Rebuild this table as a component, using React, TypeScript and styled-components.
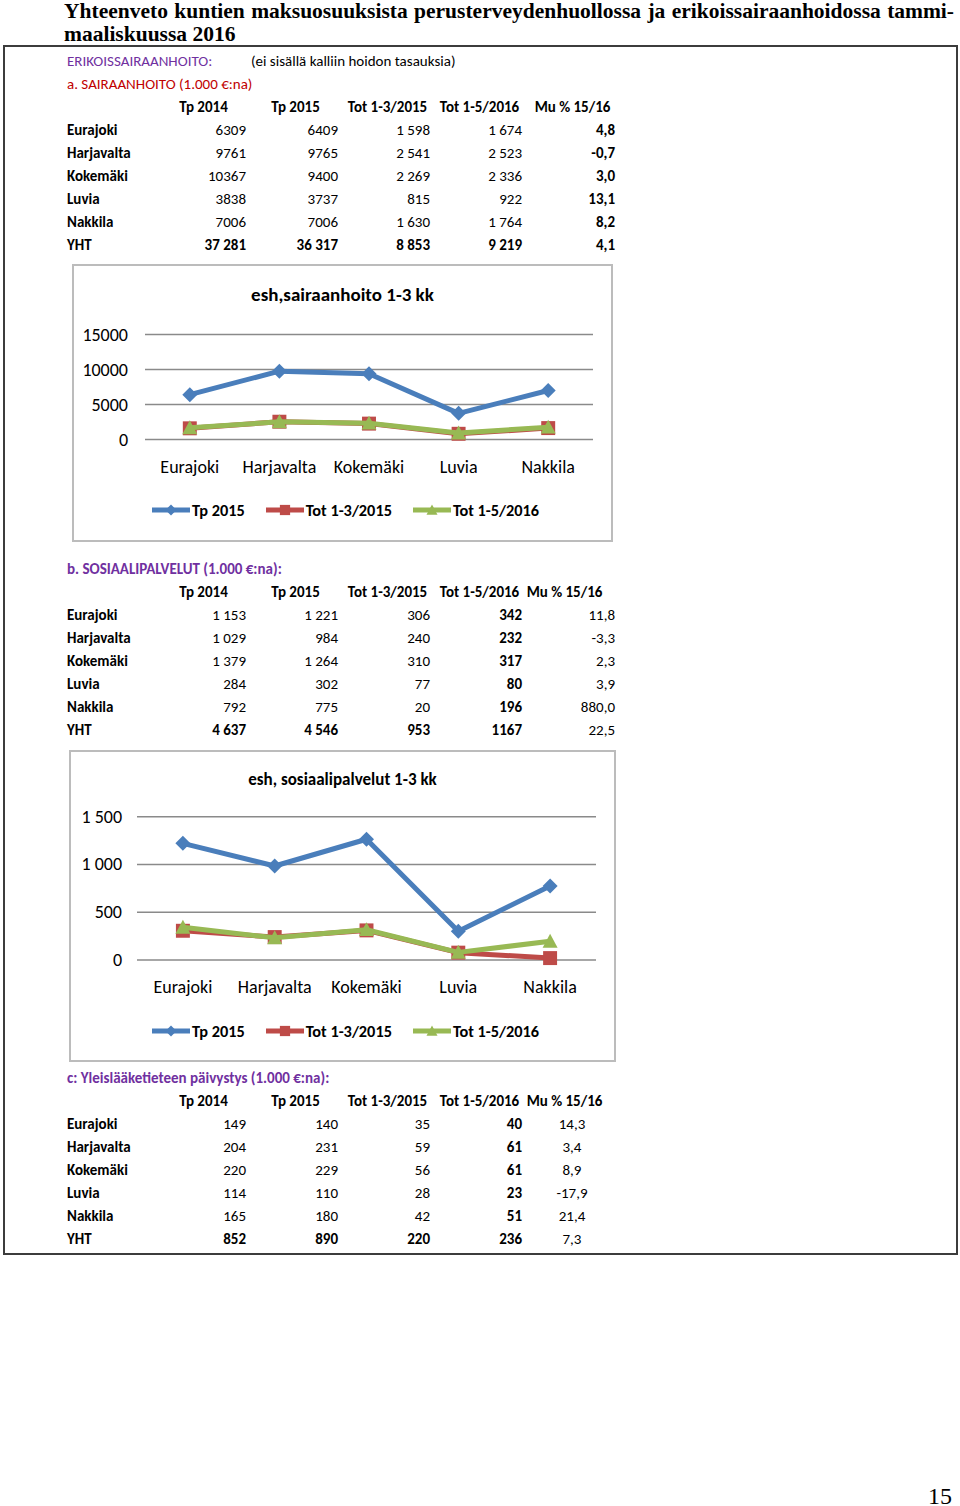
import React from 'react';
import styled, { createGlobalStyle } from 'styled-components';

const CAL = `"Carlito", "Calibri", "Liberation Sans Narrow", "DejaVu Sans Condensed", sans-serif`;

const GlobalStyle = createGlobalStyle`
  html, body { margin: 0; padding: 0; background: #fff; }
  body { width: 960px; height: 1506px; overflow: hidden; }
`;

const Page = styled.div`
  width: 960px;
  height: 1506px;
  font-family: ${CAL};
  color: #000;
`;

const Title = styled.h1`
  margin: 0;
  padding: 0 6px 0 64px;
  font: bold 21.5px/23px "Liberation Serif", "Times New Roman", serif;
`;

const TitleLine = styled.span<{ $justify?: boolean }>`
  display: block;
  text-align: left;
  text-align-last: ${(p) => (p.$justify ? 'justify' : 'left')};
`;

const Frame = styled.section`
  margin: -1px 0 0 3px;
  width: 955px;
  box-sizing: border-box;
  border: 2px solid #3c3c3c;
  padding: 3px 0 2px 62px;
`;

const Table = styled.div`
  display: grid;
  grid-template-columns: 87px 92px 92px 92px 92px 93px;
  grid-auto-rows: 23px;
  align-items: center;
  font-size: 15px;
  line-height: 23px;
  white-space: nowrap;
`;

const Caption = styled.div<{ $color: string; $bold?: boolean; $span?: string }>`
  grid-column: ${(p) => p.$span || '1 / -1'};
  color: ${(p) => p.$color};
  font-weight: ${(p) => (p.$bold ? 'bold' : 'normal')};
`;

const Note = styled.div`
  grid-column: 3 / -1;
  padding-left: 5px;
`;

const Head = styled.div<{ $pl?: number; $pr?: number }>`
  font-weight: bold;
  text-align: center;
  padding-left: ${(p) => p.$pl ?? 0}px;
  padding-right: ${(p) => p.$pr ?? 0}px;
`;

const Label = styled.div`
  font-weight: bold;
`;

const Num = styled.div<{ $bold?: boolean; $center?: boolean }>`
  font-weight: ${(p) => (p.$bold ? 'bold' : 'normal')};
  text-align: ${(p) => (p.$center ? 'center' : 'right')};
  padding-left: ${(p) => (p.$center ? 7 : 0)}px;
`;

const ChartBox = styled.div<{ $w: number; $h: number; $ml: number; $mt: number }>`
  width: ${(p) => p.$w}px;
  height: ${(p) => p.$h}px;
  margin: ${(p) => p.$mt}px 0 0 ${(p) => p.$ml}px;
  box-sizing: border-box;
  border: 2px solid #bcbcbc;
  display: flex;
  flex-direction: column;
`;

const ChartTitle = styled.div<{ $h: number; $size: number }>`
  height: ${(p) => p.$h}px;
  display: flex;
  align-items: center;
  justify-content: center;
  font-weight: bold;
  font-size: ${(p) => p.$size}px;
`;

const PlotSvg = styled.svg`
  display: block;
  flex: none;
  text {
    font-family: ${CAL};
    font-size: 18px;
    fill: #000;
  }
`;

const Legend = styled.div<{ $h: number; $pl: number }>`
  height: ${(p) => p.$h}px;
  display: flex;
  align-items: center;
  gap: 21px;
  padding-left: ${(p) => p.$pl}px;
`;

const LegendItem = styled.div`
  display: flex;
  align-items: center;
  gap: 2px;
  font-weight: bold;
  font-size: 16.3px;
`;

type MarkerKind = 'diamond' | 'square' | 'triangle';

const BLUE = '#4a7ebb';
const RED = '#be4b48';
const GREEN = '#98b954';

const Marker: React.FC<{ kind: MarkerKind; x: number; y: number; color: string; r?: number }> = ({
  kind,
  x,
  y,
  color,
  r = 7.5,
}) => {
  if (kind === 'diamond') {
    return <polygon points={`${x},${y - r} ${x + r},${y} ${x},${y + r} ${x - r},${y}`} fill={color} />;
  }
  if (kind === 'square') {
    const s = r * 0.93;
    return <rect x={x - s} y={y - s} width={s * 2} height={s * 2} fill={color} />;
  }
  return <polygon points={`${x},${y - r} ${x + r},${y + r * 0.85} ${x - r},${y + r * 0.85}`} fill={color} />;
};

type Series = { name: string; color: string; marker: MarkerKind; values: number[] };

type ChartCfg = {
  w: number;
  h: number;
  ml: number;
  mt: number;
  title: string;
  titleSize: number;
  titleH: number;
  svgH: number;
  gx0: number;
  gx1: number;
  ticks: { label: string; value: number }[];
  yZero: number;
  perUnit: number;
  labelRight: number;
  catY: number;
  legendH: number;
  legendPl: number;
};

const CATS = ['Eurajoki', 'Harjavalta', 'Kokemäki', 'Luvia', 'Nakkila'];

const LineChart: React.FC<{ cfg: ChartCfg; series: Series[] }> = ({ cfg, series }) => {
  const innerW = cfg.w - 4;
  const step = (cfg.gx1 - cfg.gx0) / CATS.length;
  const xs = CATS.map((_, i) => cfg.gx0 + step * (i + 0.5));
  const yOf = (v: number) => cfg.yZero - v * cfg.perUnit;
  return (
    <ChartBox $w={cfg.w} $h={cfg.h} $ml={cfg.ml} $mt={cfg.mt}>
      <ChartTitle $h={cfg.titleH} $size={cfg.titleSize}>
        {cfg.title}
      </ChartTitle>
      <PlotSvg width={innerW} height={cfg.svgH} viewBox={`0 0 ${innerW} ${cfg.svgH}`}>
        {cfg.ticks.map((t) => (
          <g key={t.label}>
            <line x1={cfg.gx0} x2={cfg.gx1} y1={yOf(t.value)} y2={yOf(t.value)} stroke="#8a8a8a" strokeWidth={1.5} />
            <text x={cfg.labelRight} y={yOf(t.value)} textAnchor="end" dominantBaseline="central">
              {t.label}
            </text>
          </g>
        ))}
        {CATS.map((c, i) => (
          <text key={c} x={xs[i]} y={cfg.catY} textAnchor="middle" dominantBaseline="central">
            {c}
          </text>
        ))}
        {series.map((s) => (
          <g key={s.name}>
            <polyline
              points={s.values.map((v, i) => `${xs[i]},${yOf(v)}`).join(' ')}
              fill="none"
              stroke={s.color}
              strokeWidth={5}
              strokeLinejoin="round"
            />
            {s.values.map((v, i) => (
              <Marker key={i} kind={s.marker} x={xs[i]} y={yOf(v)} color={s.color} />
            ))}
          </g>
        ))}
      </PlotSvg>
      <Legend $h={cfg.legendH} $pl={cfg.legendPl}>
        {series.map((s) => (
          <LegendItem key={s.name}>
            <svg width={38} height={16} viewBox="0 0 38 16">
              <line x1={0} x2={38} y1={8} y2={8} stroke={s.color} strokeWidth={5} />
              <Marker kind={s.marker} x={19} y={8} color={s.color} r={5.5} />
            </svg>
            {s.name}
          </LegendItem>
        ))}
      </Legend>
    </ChartBox>
  );
};

type Row = { name: string; cells: string[] };

const HEADERS = ['Tp 2014', 'Tp 2015', 'Tot 1-3/2015', 'Tot 1-5/2016', 'Mu % 15/16'];

const DataTable: React.FC<{
  rows: Row[];
  boldCol: number;
  muCenter?: boolean;
  muHeadLeft?: boolean;
  yhtMuBold?: boolean;
  children?: React.ReactNode;
}> = ({ rows, boldCol, muCenter, muHeadLeft, yhtMuBold, children }) => (
  <Table>
    {children}
    <div />
    {HEADERS.map((h, i) =>
      i === 4 ? (
        <Head key={h} $pl={muHeadLeft ? 0 : 8} $pr={muHeadLeft ? 8 : 0}>
          {h}
        </Head>
      ) : (
        <Head key={h} $pl={7}>
          {h}
        </Head>
      )
    )}
    {rows.map((r) => {
      const yht = r.name === 'YHT';
      return (
        <React.Fragment key={r.name}>
          <Label>{r.name}</Label>
          {r.cells.map((c, i) => (
            <Num
              key={i}
              $center={i === 4 && muCenter}
              $bold={i === boldCol || (yht && (i !== 4 || yhtMuBold))}
            >
              {c}
            </Num>
          ))}
        </React.Fragment>
      );
    })}
  </Table>
);

const rowsA: Row[] = [
  { name: 'Eurajoki', cells: ['6309', '6409', '1 598', '1 674', '4,8'] },
  { name: 'Harjavalta', cells: ['9761', '9765', '2 541', '2 523', '-0,7'] },
  { name: 'Kokemäki', cells: ['10367', '9400', '2 269', '2 336', '3,0'] },
  { name: 'Luvia', cells: ['3838', '3737', '815', '922', '13,1'] },
  { name: 'Nakkila', cells: ['7006', '7006', '1 630', '1 764', '8,2'] },
  { name: 'YHT', cells: ['37 281', '36 317', '8 853', '9 219', '4,1'] },
];

const rowsB: Row[] = [
  { name: 'Eurajoki', cells: ['1 153', '1 221', '306', '342', '11,8'] },
  { name: 'Harjavalta', cells: ['1 029', '984', '240', '232', '-3,3'] },
  { name: 'Kokemäki', cells: ['1 379', '1 264', '310', '317', '2,3'] },
  { name: 'Luvia', cells: ['284', '302', '77', '80', '3,9'] },
  { name: 'Nakkila', cells: ['792', '775', '20', '196', '880,0'] },
  { name: 'YHT', cells: ['4 637', '4 546', '953', '1167', '22,5'] },
];

const rowsC: Row[] = [
  { name: 'Eurajoki', cells: ['149', '140', '35', '40', '14,3'] },
  { name: 'Harjavalta', cells: ['204', '231', '59', '61', '3,4'] },
  { name: 'Kokemäki', cells: ['220', '229', '56', '61', '8,9'] },
  { name: 'Luvia', cells: ['114', '110', '28', '23', '-17,9'] },
  { name: 'Nakkila', cells: ['165', '180', '42', '51', '21,4'] },
  { name: 'YHT', cells: ['852', '890', '220', '236', '7,3'] },
];

const chart1: ChartCfg = {
  w: 541,
  h: 278,
  ml: 5,
  mt: 7,
  title: 'esh,sairaanhoito 1-3 kk',
  titleSize: 19,
  titleH: 56,
  svgH: 170,
  gx0: 71,
  gx1: 519,
  ticks: [
    { label: '15000', value: 15000 },
    { label: '10000', value: 10000 },
    { label: '5000', value: 5000 },
    { label: '0', value: 0 },
  ],
  yZero: 117.5,
  perUnit: 0.007,
  labelRight: 54,
  catY: 145,
  legendH: 36,
  legendPl: 78,
};

const chart2: ChartCfg = {
  w: 547,
  h: 312,
  ml: 2,
  mt: 8,
  title: 'esh, sosiaalipalvelut 1-3 kk',
  titleSize: 17,
  titleH: 54,
  svgH: 200,
  gx0: 66,
  gx1: 525,
  ticks: [
    { label: '1 500', value: 1500 },
    { label: '1 000', value: 1000 },
    { label: '500', value: 500 },
    { label: '0', value: 0 },
  ],
  yZero: 154,
  perUnit: 143.3 / 1500,
  labelRight: 51,
  catY: 181,
  legendH: 50,
  legendPl: 81,
};

const series1: Series[] = [
  { name: 'Tp 2015', color: BLUE, marker: 'diamond', values: [6409, 9765, 9400, 3737, 7006] },
  { name: 'Tot 1-3/2015', color: RED, marker: 'square', values: [1598, 2541, 2269, 815, 1630] },
  { name: 'Tot 1-5/2016', color: GREEN, marker: 'triangle', values: [1674, 2523, 2336, 922, 1764] },
];

const series2: Series[] = [
  { name: 'Tp 2015', color: BLUE, marker: 'diamond', values: [1221, 984, 1264, 302, 775] },
  { name: 'Tot 1-3/2015', color: RED, marker: 'square', values: [306, 240, 310, 77, 20] },
  { name: 'Tot 1-5/2016', color: GREEN, marker: 'triangle', values: [342, 232, 317, 80, 196] },
];

const Section = styled.div<{ $mt: number }>`
  margin-top: ${(p) => p.$mt}px;
`;

const PageNumber = styled.div`
  margin-top: 231px;
  padding-right: 8px;
  text-align: right;
  font: 24px/20px "Liberation Serif", "Times New Roman", serif;
`;

const PURPLE = '#7030a0';
const DARKRED = '#c00000';

export default function App() {
  return (
    <Page>
      <GlobalStyle />
      <Title>
        <TitleLine $justify>
          Yhteenveto kuntien maksuosuuksista perusterveydenhuollossa ja erikoissairaanhoidossa tammi-
        </TitleLine>
        <TitleLine>maaliskuussa 2016</TitleLine>
      </Title>
      <Frame>
        <DataTable rows={rowsA} boldCol={4} yhtMuBold>
          <Caption $color={PURPLE} $span="1 / 3">
            ERIKOISSAIRAANHOITO:
          </Caption>
          <Note>(ei sisällä kalliin hoidon tasauksia)</Note>
          <Caption $color={DARKRED}>a. SAIRAANHOITO (1.000 €:na)</Caption>
        </DataTable>
        <LineChart cfg={chart1} series={series1} />
        <Section $mt={16}>
          <DataTable rows={rowsB} boldCol={3} muHeadLeft>
            <Caption $color={PURPLE} $bold>
              b. SOSIAALIPALVELUT (1.000 €:na):
            </Caption>
          </DataTable>
        </Section>
        <LineChart cfg={chart2} series={series2} />
        <Section $mt={5}>
          <DataTable rows={rowsC} boldCol={3} muCenter muHeadLeft>
            <Caption $color={PURPLE} $bold>
              c: Yleislääketieteen päivystys (1.000 €:na):
            </Caption>
          </DataTable>
        </Section>
      </Frame>
      <PageNumber>15</PageNumber>
    </Page>
  );
}
